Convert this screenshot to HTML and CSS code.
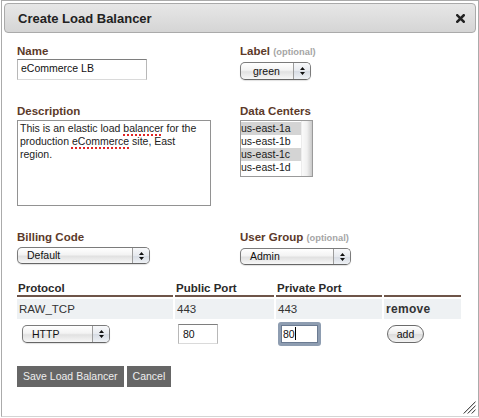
FILE: index.html
```html
<!DOCTYPE html>
<html>
<head>
<meta charset="utf-8">
<link rel="stylesheet" href="styles.css">
</head>
<body>
<div class="dialog">
  <div class="titlebar">
    <span class="title">Create Load Balancer</span>
    <svg class="close" width="9" height="9" viewBox="0 0 9 9"><path d="M1.3 1.3 L7.7 7.7 M7.7 1.3 L1.3 7.7" stroke="#222" stroke-width="2.6" stroke-linecap="square"/></svg>
  </div>
  <div class="body">
    <div class="grid">
      <div class="field">
        <span class="lbl">Name</span>
        <div class="textbox name">eCommerce LB</div>
      </div>
      <div class="field">
        <span class="lbl">Label <span class="opt">(optional)</span></span>
        <div class="select sel-label"><span class="val">green</span><span class="arr"><svg width="7" height="10" viewBox="0 0 7 10"><path d="M1 4 L6 4 L3.5 1 Z M1 6 L6 6 L3.5 9 Z" fill="#111"/></svg></span></div>
      </div>
      <div class="field">
        <span class="lbl">Description</span>
        <div class="ta">This is an elastic load <span class="sp">balancer</span> for the<br>production <span class="sp">eCommerce</span> site, East<br>region.</div>
      </div>
      <div class="field">
        <span class="lbl">Data Centers</span>
        <div class="listbox">
          <ul class="items">
            <li class="on">us-east-1a</li>
            <li>us-east-1b</li>
            <li class="on">us-east-1c</li>
            <li>us-east-1d</li>
          </ul>
          <div class="scroll"></div>
        </div>
      </div>
      <div class="field">
        <span class="lbl">Billing Code</span>
        <div class="select sel-billing"><span class="val">Default</span><span class="arr"><svg width="7" height="10" viewBox="0 0 7 10"><path d="M1 4 L6 4 L3.5 1 Z M1 6 L6 6 L3.5 9 Z" fill="#111"/></svg></span></div>
      </div>
      <div class="field">
        <span class="lbl">User Group <span class="opt">(optional)</span></span>
        <div class="select sel-group"><span class="val">Admin</span><span class="arr"><svg width="7" height="10" viewBox="0 0 7 10"><path d="M1 4 L6 4 L3.5 1 Z M1 6 L6 6 L3.5 9 Z" fill="#111"/></svg></span></div>
      </div>
    </div>

    <table class="ports">
      <colgroup><col class="c1"><col class="c2"><col class="c3"><col class="c4"></colgroup>
      <thead>
        <tr><th>Protocol</th><th>Public Port</th><th>Private Port</th><th></th></tr>
      </thead>
      <tbody>
        <tr class="row">
          <td>RAW_TCP</td><td>443</td><td>443</td><td class="remove">remove</td>
        </tr>
        <tr class="new">
          <td><div class="select sel-proto"><span class="val">HTTP</span><span class="arr"><svg width="7" height="10" viewBox="0 0 7 10"><path d="M1 4 L6 4 L3.5 1 Z M1 6 L6 6 L3.5 9 Z" fill="#111"/></svg></span></div></td>
          <td><div class="textbox port">80</div></td>
          <td><div class="textbox focus">80<span class="caret"></span></div></td>
          <td><div class="addbtn">add</div></td>
        </tr>
      </tbody>
    </table>

    <div class="actions">
      <span class="btn">Save Load Balancer</span>
      <span class="btn">Cancel</span>
    </div>
  </div>
  <svg class="grip" width="13" height="13" viewBox="0 0 13 13">
    <path d="M0.5 12.5 L12.5 0.5 M4.5 12.5 L12.5 4.5 M8.5 12.5 L12.5 8.5" stroke="#555" stroke-width="1"/>
    <path d="M1.5 12.5 L12.5 1.5 M5.5 12.5 L12.5 5.5 M9.5 12.5 L12.5 9.5" stroke="#ccc" stroke-width="1"/>
  </svg>
</div>
</body>
</html>
```

FILE: styles.css
```css
* { box-sizing: border-box; }

body {
  margin: 0;
  background: #fff;
  font-family: "Liberation Sans", Arial, Helvetica, sans-serif;
  color: #222;
}

.dialog {
  position: relative;
  margin-left: 1px;
  width: 478px;
  height: 417px;
  border: 1px solid #ababab;
  border-bottom-color: #d4d4d4;
  padding: 2px 2px 0 2px;
  background: #fff;
}

.titlebar {
  display: flex;
  align-items: center;
  justify-content: space-between;
  height: 30px;
  border: 1px solid #aaaaaa;
  border-radius: 4px;
  background: linear-gradient(#e7e7e7, #d5d5d5);
  padding: 2px 10px 0 13px;
}

.title {
  font-size: 13px;
  font-weight: bold;
  color: #222;
  line-height: 26px;
}

.close { display: block; margin-top: -2px; }

.body {
  padding: 11px 0 0 13px;
}

.grid {
  display: grid;
  grid-template-columns: 223px 1fr;
  row-gap: 24px;
}

.field { display: flex; flex-direction: column; align-items: flex-start; }

.lbl {
  display: block;
  font-size: 11.5px;
  font-weight: bold;
  color: #5c3a2a;
  line-height: 14px;
  margin-bottom: 1px;
}

.opt {
  font-size: 9.3px;
  color: #a5a5a5;
}

.textbox {
  border: 1px solid #b8b8b8;
  border-top-color: #7e7e7e;
  border-bottom-color: #dadada;
  font-size: 10.5px;
  color: #111;
  background: #fff;
  white-space: nowrap;
}

.name {
  width: 130px;
  height: 21px;
  padding: 0 3px 2px 3px;
  line-height: 17px;
}

.select {
  display: flex;
  height: 18px;
  margin-top: 2px;
  border: 1px solid #7b7b7b;
  border-bottom-color: #666;
  border-radius: 5px;
  background: linear-gradient(#ffffff, #f3f3f3 45%, #e1e1e1 55%, #f7f7f7);
  box-shadow: 0 1px 1px rgba(0,0,0,0.12);
  font-size: 10.5px;
  color: #111;
  overflow: hidden;
}

.select .val {
  flex: 1;
  padding-left: 9px;
  line-height: 16px;
}

.select .arr {
  width: 17px;
  flex: none;
  border-left: 1px solid #9c9c9c;
  display: flex;
  align-items: center;
  justify-content: center;
  background: linear-gradient(#f8f9fb, #e6e9ee 50%, #d6dbe3 51%, #eef1f5);
}

.sel-label { width: 71px; }
.sel-label .val { padding-left: 12px; }
.sel-billing { width: 133px; height: 17px; }
.sel-group { width: 111px; height: 17px; }
.sel-billing .val, .sel-group .val { line-height: 15px; }
.sel-proto { width: 88px; margin: 0 0 0 5px; }

.ta {
  width: 194px;
  height: 86px;
  margin-top: 1px;
  border: 1px solid #929292;
  padding: 1px 2px;
  font-size: 10.5px;
  line-height: 13px;
  color: #222;
}

.sp {
  text-decoration: underline dotted #e02424;
  text-decoration-thickness: 2px;
  text-underline-offset: 2px;
}

.listbox {
  display: flex;
  width: 73px;
  height: 57px;
  margin-top: 1px;
  border: 1px solid #9a9a9a;
  padding: 1px 0 0 0;
}

.items {
  list-style: none;
  margin: 0;
  padding: 0;
  flex: 1;
}

.items li {
  font-size: 10.5px;
  line-height: 13px;
  height: 13px;
  color: #1a1a1a;
}

.items li.on { background: #d4d4d4; }

.scroll {
  width: 11px;
  margin-top: -1px;
  border-left: 1px solid #ececec;
  background: linear-gradient(90deg, #fafafa, #f0f0f0 50%, #c9c9c9);
}

.ports {
  border-collapse: separate;
  border-spacing: 2px;
  table-layout: fixed;
  width: 448px;
  margin: 13.5px 0 0 -2px;
  color: #333;
}

.c1 { width: 156px; }
.c2 { width: 99px; }
.c3 { width: 106px; }
.c4 { width: 77px; }

.ports th {
  text-align: left;
  font-size: 11.5px;
  font-weight: bold;
  line-height: 14px;
  padding: 0 1px;
  border-bottom: 2px solid #6e5549;
  color: #2a2a2a;
}

.row td {
  height: 20px;
  padding: 0 1px 0 2px;
  background: #eef1f3;
  font-size: 11.5px;
  vertical-align: middle;
}

.row td.remove {
  font-weight: bold;
  font-size: 12px;
  letter-spacing: 0.3px;
  padding-left: 2px;
}

.new td {
  height: 26px;
  padding: 0;
  vertical-align: middle;
}

.port {
  width: 40px;
  height: 20px;
  margin-left: 3px;
  padding: 0 4px;
  line-height: 18px;
}

.focus {
  display: flex;
  align-items: center;
  width: 43px;
  height: 24px;
  margin-left: 2px;
  border: 3px solid #8e9db1;
  border-radius: 3px;
  box-shadow: inset 0 0 0 1px #6b7b92;
  padding-left: 2px;
  line-height: 18px;
}

.caret {
  display: inline-block;
  width: 1px;
  height: 13px;
  background: #000;
  margin-left: 0.5px;
}

.addbtn {
  width: 37px;
  height: 18px;
  margin-left: 3px;
  border: 1px solid #6b6b6b;
  border-radius: 9px;
  background: linear-gradient(#ffffff, #ececec 50%, #dcdcdc 51%, #f3f3f3);
  font-size: 10.5px;
  color: #111;
  text-align: center;
  line-height: 16px;
}

.actions {
  display: flex;
  gap: 3px;
  margin-top: 17px;
}

.btn {
  height: 21px;
  padding: 0 6px;
  background: #666;
  color: #eee;
  font-size: 10.5px;
  line-height: 21px;
}

.grip {
  position: absolute;
  right: 2px;
  bottom: 2px;
}
```
